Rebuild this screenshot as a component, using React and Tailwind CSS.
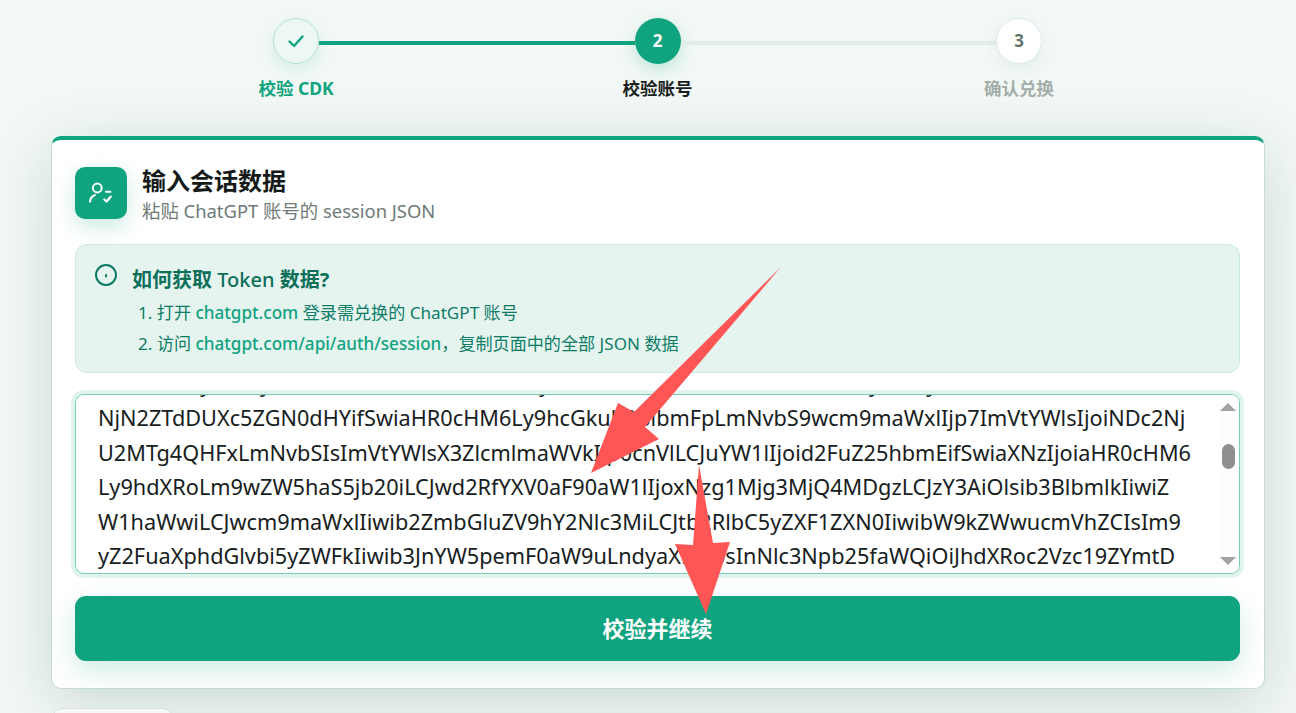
const sans = { fontFamily: '"Noto Sans", "Noto Sans CJK SC", sans-serif' };

const sessionLines = [
  "ZW50aW5ylcm2yZXhwIiwiaWF0IzE3NDk5c5yZW1haWwiOiIxMzA4NDU2E53cyImViyXN0aW9uIiwiZXh3Ilox",
  "NjN2ZTdDUXc5ZGN0dHYifSwiaHR0cHM6Ly9hcGkub3BlbmFpLmNvbS9wcm9maWxlIjp7ImVtYWlsIjoiNDc2Nj",
  "U2MTg4QHFxLmNvbSIsImVtYWlsX3ZlcmlmaWVkIjp0cnVlLCJuYW1lIjoid2FuZ25hbmEifSwiaXNzIjoiaHR0cHM6",
  "Ly9hdXRoLm9wZW5haS5jb20iLCJwd2RfYXV0aF90aW1lIjoxNzg1Mjg3MjQ4MDgzLCJzY3AiOlsib3BlbmlkIiwiZ",
  "W1haWwiLCJwcm9maWxlIiwib2ZmbGluZV9hY2Nlc3MiLCJtb2RlbC5yZXF1ZXN0IiwibW9kZWwucmVhZCIsIm9",
  "yZ2FuaXphdGlvbi5yZWFkIiwib3JnYW5pemF0aW9uLndyaXRlIl0sInNlc3Npb25faWQiOiJhdXRoc2Vzc19ZYmtD",
];

function Step({ circle, label, labelClass, children }) {
  return (
    <div className="flex w-[46px] shrink-0 flex-col items-center">
      <div className={`flex h-[46px] w-[46px] items-center justify-center rounded-full ${circle}`}>
        {children}
      </div>
      <div className={`mt-[12px] whitespace-nowrap text-[17.5px] leading-[24px] font-bold ${labelClass}`}>{label}</div>
    </div>
  );
}

function Stepper() {
  return (
    <div className="ml-[273px] flex h-[82px] w-[769px] items-start">
      <Step
        circle="border border-[#b5e0d2] bg-[#edf8f4] shadow-[0_6px_16px_rgba(16,163,127,0.12)]"
        label="校验 CDK"
        labelClass="text-[#10a37f]"
      >
        <svg width="20" height="20" viewBox="0 0 20 20" fill="none" stroke="#10a37f" strokeWidth="2.4" strokeLinecap="round" strokeLinejoin="round">
          <path d="M3.5 10.5 8 15 16.5 5.5" />
        </svg>
      </Step>
      <div className="mt-[23px] h-[4px] flex-1 bg-[#10a37f]" />
      <Step
        circle="bg-[#10a37f] shadow-[0_6px_16px_rgba(16,163,127,0.22)] text-white"
        label="校验账号"
        labelClass="text-[#1a1f1d]"
      >
        <span className="text-[17px] font-bold">2</span>
      </Step>
      <div className="mt-[23px] h-[4px] flex-1 bg-[#e2ede8]" />
      <Step
        circle="border border-[#dfeae5] bg-white shadow-[0_6px_16px_rgba(16,80,60,0.06)] text-[#66736e]"
        label="确认兑换"
        labelClass="text-[#a3aeaa]"
      >
        <span className="text-[17px] font-bold">3</span>
      </Step>
    </div>
  );
}

function HeaderIcon() {
  return (
    <div className="flex h-[52px] w-[52px] shrink-0 items-center justify-center rounded-[10px] bg-[#10a37f] shadow-[0_8px_20px_rgba(16,163,127,0.22)]">
      <svg width="28" height="28" viewBox="0 0 28 28" fill="none" stroke="white" strokeLinecap="round" strokeLinejoin="round">
        <circle cx="10.3" cy="9" r="4.4" strokeWidth="2" />
        <path d="M3 22.7c.3-3.2 2-5.6 5-6.7" strokeWidth="2" />
        <path d="M19 12.7h4.5" strokeWidth="2" />
        <path d="M17.3 20.5l2.2 2 4.2-4.8" strokeWidth="2.2" />
      </svg>
    </div>
  );
}

function InfoBox() {
  return (
    <div className="mt-[25px] h-[129px] rounded-[12px] border border-[#c9eadf] bg-[#e6f4ef] px-[18px] pt-[19px]">
      <div className="flex items-start gap-[14px]">
        <svg width="24" height="24" viewBox="0 0 24 24" fill="none" stroke="#0b7a63" strokeWidth="2" className="mt-[-1px] shrink-0">
          <circle cx="12" cy="12" r="10" />
          <path d="M12 12v1.5" strokeLinecap="round" />
        </svg>
        <div className="mt-[1px] text-[20px] leading-[30px] font-bold text-[#0b6f5a]">
          如何获取 <span className="font-medium">Token</span> 数据?
        </div>
      </div>
      <ol className="mt-[2px] pl-[44px] text-[17.1px] leading-[31px] text-[#0d7d67]">
        <li>
          1. 打开 <span className="font-medium text-[#10a37f]">chatgpt.com</span> 登录需兑换的 ChatGPT 账号
        </li>
        <li>
          2. 访问 <span className="font-medium text-[#10a37f]">chatgpt.com/api/auth/session</span>{"\uFF0C"}复制页面中的全部 JSON 数据
        </li>
      </ol>
    </div>
  );
}

function SessionField() {
  return (
    <div className="relative mt-[21px] h-[180px] overflow-hidden rounded-[9px] border border-[#74cfb4] bg-white shadow-[0_0_0_4px_#e0f3ed]">
      <div className="mt-[-28px] pl-[22px] text-[21.7px] leading-[34.4px] whitespace-nowrap text-[#17201d]">
        {sessionLines.map((line) => (
          <div key={line}>{line}</div>
        ))}
      </div>
      <div className="absolute inset-y-0 right-0 flex w-[19px] flex-col items-center bg-[#fdfdfd] pt-[8px] pr-[3px]">
        <div className="h-0 w-0 border-x-[8px] border-b-[8px] border-x-transparent border-b-[#a3a3a3]" />
        <div className="mt-[33px] h-[25px] w-[13px] rounded-full bg-[#8f8f8f]" />
        <div className="mt-auto mb-[8px] h-0 w-0 border-x-[8px] border-t-[8px] border-x-transparent border-t-[#a3a3a3]" />
      </div>
    </div>
  );
}

function Arrows() {
  return (
    <svg className="pointer-events-none absolute top-0 left-0" width="1296" height="713" fill="#ff5555">
      <polygon points="781,267 634,412 618,403 591,473 659,439 645,427" />
      <polygon points="699,465 693,545 675,544 706,614 730,542 713,543" />
    </svg>
  );
}

export default function App() {
  return (
    <div className="relative h-[713px] overflow-hidden bg-[#f2f8f5] pt-[18px]" style={sans}>
      <Stepper />
      <div className="mt-[36px] ml-[51px] h-[553px] w-[1214px] rounded-[10px] border border-t-4 border-[#c5ddd4] border-t-[#10a37f] bg-white pt-[27px] pr-[24px] pl-[23px] shadow-[0_14px_60px_rgba(16,70,50,0.17)]">
        <div className="flex h-[52px] items-start gap-[15px]">
          <HeaderIcon />
          <div>
            <h2 className="text-[24px] leading-[28px] font-bold text-[#141a18]">输入会话数据</h2>
            <p className="mt-[3px] text-[18.4px] leading-[26px] text-[#6e7a76]">粘贴 ChatGPT 账号的 session JSON</p>
          </div>
        </div>
        <InfoBox />
        <SessionField />
        <button className="mt-[22px] h-[65px] w-full rounded-[11px] bg-[#10a37f] text-[22px] font-bold text-white shadow-[0_10px_28px_rgba(16,163,127,0.2)]">
          校验并继续
        </button>
      </div>
      <div className="mt-[19px] ml-[52px] h-[40px] w-[121px] rounded-[10px] border border-[#d3e2dc] bg-[#f6f9f8]" />
      <Arrows />
    </div>
  );
}
